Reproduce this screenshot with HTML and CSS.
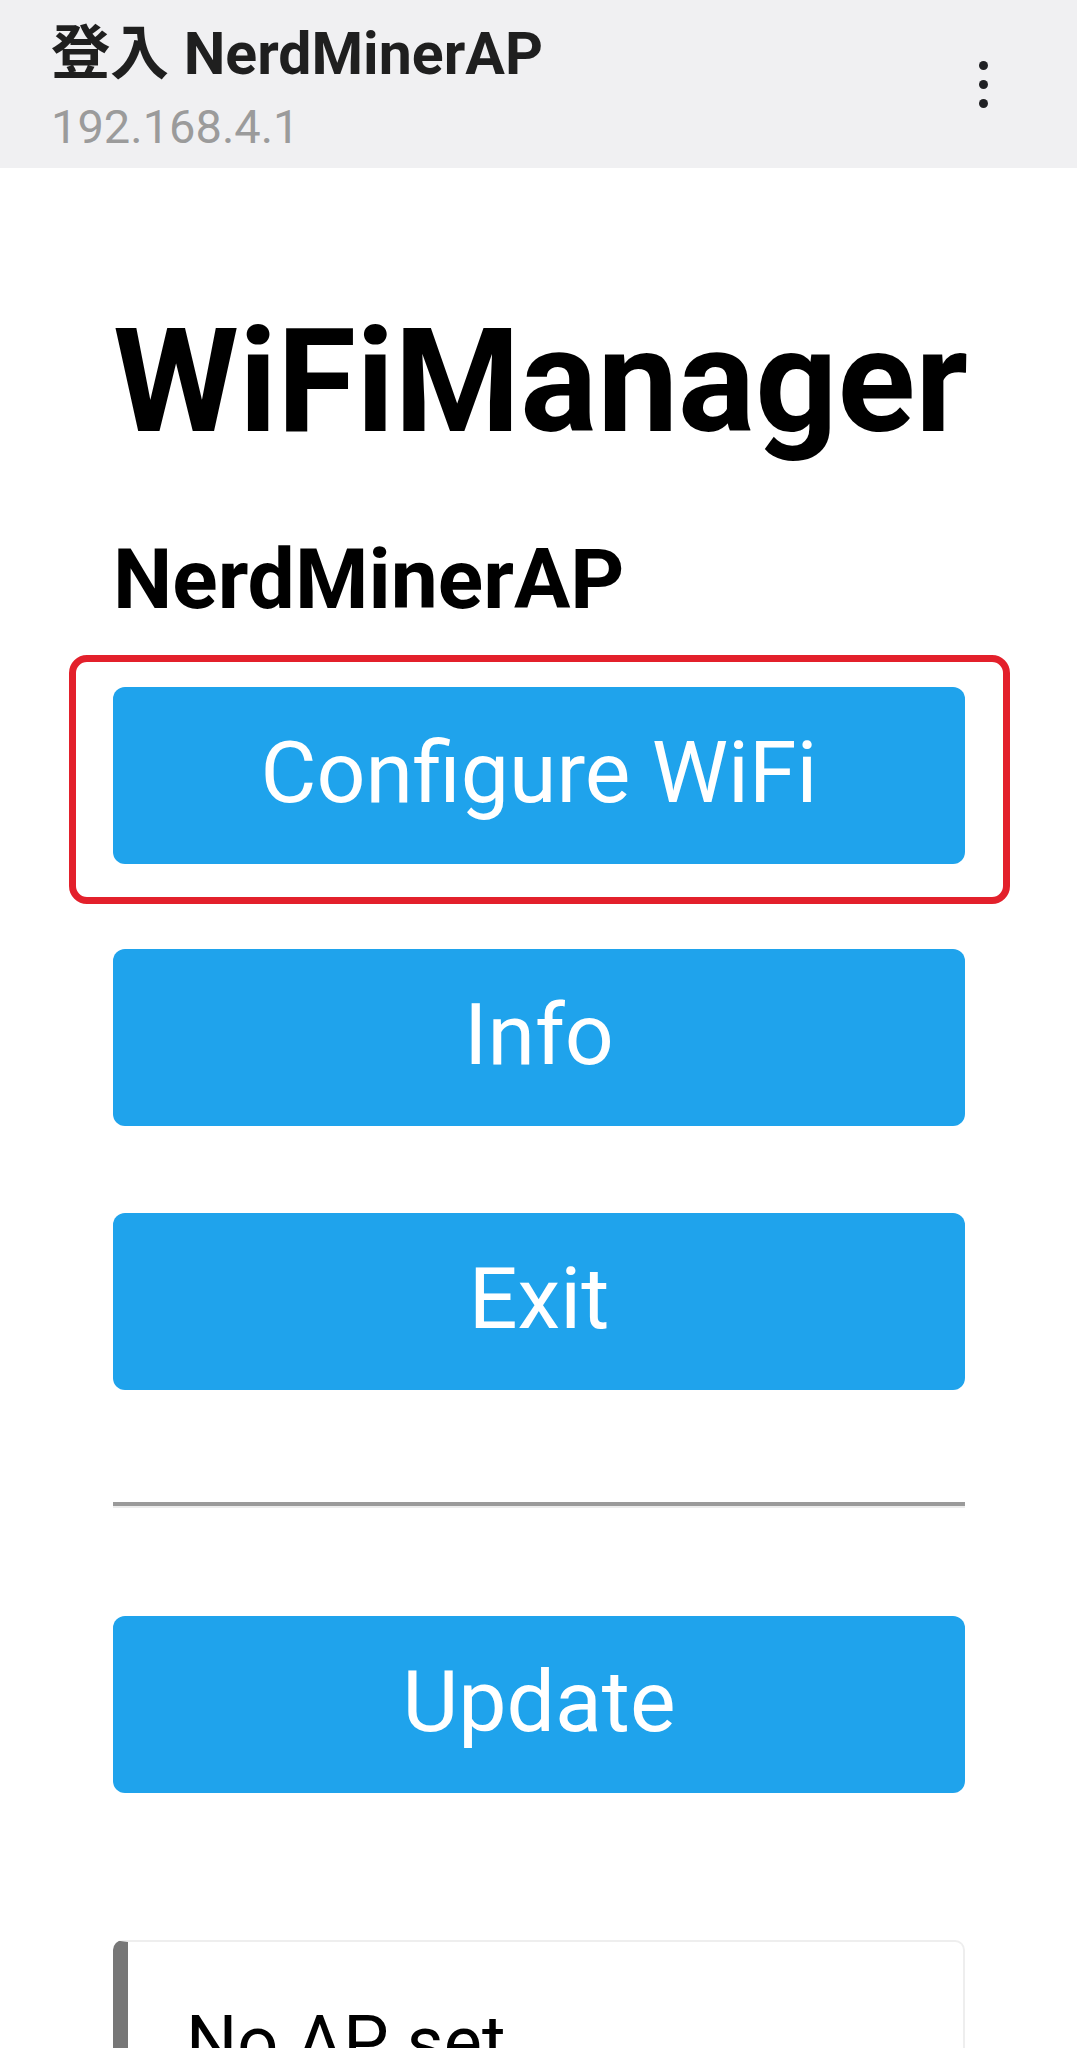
FILE: index.html
```html
<!DOCTYPE html>
<html lang="zh-TW">
<head>
    <meta charset="UTF-8">
    <meta name="viewport" content="width=device-width, initial-scale=1.0">
    <title>登入 NerdMinerAP</title>
    <link rel="stylesheet" href="styles.css">
</head>
<body>
    <header class="topbar">
        <div class="topbar-text">
            <div class="topbar-title">登入 NerdMinerAP</div>
            <div class="topbar-url">192.168.4.1</div>
        </div>
        <div class="menu-dots" aria-label="menu">
            <span></span><span></span><span></span>
        </div>
    </header>

    <main class="wrap">
        <h1>WiFiManager</h1>
        <h3>NerdMinerAP</h3>

        <div class="highlight">
            <button class="btn">Configure WiFi</button>
        </div>

        <button class="btn btn-info">Info</button>
        <button class="btn btn-exit">Exit</button>

        <hr>

        <button class="btn btn-update">Update</button>

        <div class="msg">No AP set</div>
    </main>
</body>
</html>
```

FILE: styles.css
```css
/* Browser chrome */
body {
    margin: 0;
    background: #ffffff;
    font-family: Roboto, "Noto Sans CJK TC", "Noto Sans CJK SC", sans-serif;
    color: #000;
}

.topbar {
    height: 168px;
    box-sizing: border-box;
    background: #f0f0f2;
    padding: 21px 89px 0 51px;
    display: flex;
    justify-content: space-between;
    align-items: flex-start;
}

.topbar-title {
    font-size: 59px;
    line-height: 66px;
    font-weight: bold;
    color: #1f1f1f;
}

.topbar-url {
    margin-top: 14px;
    font-size: 47px;
    line-height: 52px;
    color: #9b9b9b;
}

.menu-dots {
    margin-top: 40px;
    display: flex;
    flex-direction: column;
    gap: 10px;
}

.menu-dots span {
    width: 9px;
    height: 9px;
    border-radius: 50%;
    background: #202124;
}

/* Page */
.wrap {
    padding: 0 112px 0 113px;
}

h1 {
    margin: 142px 0 0;
    font-size: 144px;
    line-height: 144px;
    font-weight: bold;
}

h3 {
    margin: 84px 0 0;
    font-size: 84px;
    line-height: 84px;
    font-weight: bold;
}

.highlight {
    margin: 33px -45px 0 -44px;
    padding: 25px 38px 33px 37px;
    border: 7px solid #e3202b;
    border-radius: 18px;
}

.btn {
    display: block;
    width: 100%;
    height: 177px;
    border: 0;
    border-radius: 12px;
    background-color: #1fa3ec;
    color: #fff;
    font-family: Roboto, sans-serif;
    font-size: 86px;
    line-height: 171px;
    padding: 0 0 6px;
}

.btn-info {
    margin-top: 45px;
}

.btn-exit {
    margin-top: 87px;
}

hr {
    margin: 112px 0 0;
    height: 0;
    border: none;
    border-top: 4px solid #9a9a9a;
    border-bottom: 2px solid #ececec;
}

.btn-update {
    margin-top: 108px;
}

.msg {
    margin-top: 147px;
    padding: 65px 20px 66px 58px;
    border: 2px solid #eeeeee;
    border-left: 15px solid #777777;
    border-radius: 10px;
    font-size: 72px;
    line-height: 72px;
}
```
